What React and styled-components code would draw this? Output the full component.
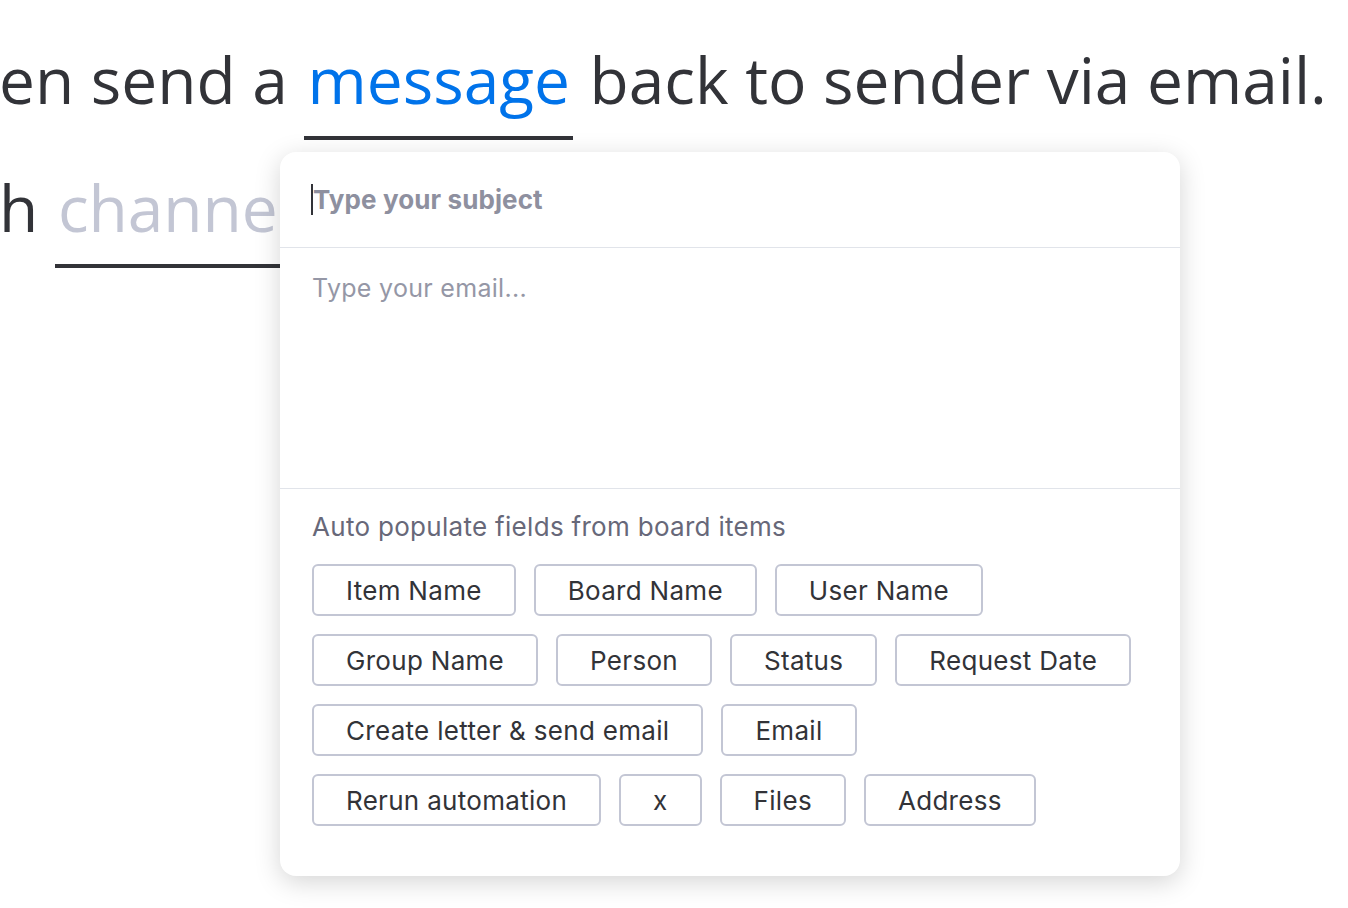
import styled, { createGlobalStyle } from "styled-components";

const GlobalStyle = createGlobalStyle`
  html, body {
    margin: 0;
    padding: 0;
    background: #ffffff;
  }
  body {
    width: 1348px;
    height: 908px;
    overflow: hidden;
  }
`

const chipRows = [
    ["Item Name", "Board Name", "User Name"],
    ["Group Name", "Person", "Status", "Request Date"],
    ["Create letter & send email", "Email"],
    ["Rerun automation", "x", "Files", "Address"],
];

const Page = styled.div`
  position: relative;
  width: 1348px;
  height: 908px;
  overflow: hidden;
  font-family: "Open Sans", "DejaVu Sans", sans-serif;
  color: #323338;
`

const Sentence = styled.div`
  display: flex;
  flex-direction: column;
  padding-top: 16px;
  margin-left: -1px;
`

const Line = styled.div`
  white-space: nowrap;
  font-size: 64px;
  line-height: 128px;
  height: 128px;
`

const Word = styled.span`
  display: inline-block;
  line-height: 112px;
  padding: 0 3px 0;
  border-bottom: 4px solid #323338;
  color: ${props => props.muted ? "#c3c6d4" : "#0073ea"};
`

const Popup = styled.div`
  position: absolute;
  left: 280px;
  top: 152px;
  width: 900px;
  height: 724px;
  background: #ffffff;
  border-radius: 16px;
  box-shadow: 0 6px 26px rgba(0, 0, 0, 0.17);
  display: flex;
  flex-direction: column;
  font-family: "Inter", "Noto Sans", sans-serif;
`

const Subject = styled.div`
  height: 95px;
  display: flex;
  align-items: center;
  padding: 0 32px;
  border-bottom: 1px solid #e1e4ea;
`

const Caret = styled.span`
  width: 2px;
  height: 31px;
  background: #323338;
  margin-left: -1px;
`

const SubjectPlaceholder = styled.span`
  font-size: 26px;
  font-weight: 700;
  color: #8e909f;
  letter-spacing: 0.1px;
`

const Body = styled.div`
  height: 241px;
  padding: 25px 32px 0;
  box-sizing: border-box;
  border-bottom: 1px solid #e1e4ea;
  font-size: 25px;
  letter-spacing: 0.3px;
  color: #9597a6;
`

const Fields = styled.div`
  padding: 21px 32px 0;
  display: flex;
  flex-direction: column;
`

const Label = styled.div`
  font-size: 26px;
  line-height: 34px;
  letter-spacing: 0.3px;
  color: #676879;
  margin-bottom: 20px;
`

const ChipGrid = styled.div`
  display: flex;
  flex-direction: column;
  gap: 18px;
`

const ChipRow = styled.div`
  display: flex;
  gap: 18px;
`

const Chip = styled.div`
  height: 52px;
  box-sizing: border-box;
  padding: 0 32px;
  border: 2px solid #c3c6d4;
  border-radius: 6px;
  display: flex;
  align-items: center;
  justify-content: center;
  font-size: 26px;
  letter-spacing: 0.3px;
  color: #323338;
  white-space: nowrap;
`

const App = () => {
    return (
        <Page>
            <GlobalStyle/>
            <Sentence>
                <Line>en send a <Word>message</Word> back to sender via email.</Line>
                <Line>h <Word muted>channel</Word></Line>
            </Sentence>
            <Popup>
                <Subject>
                    <Caret/>
                    <SubjectPlaceholder>Type your subject</SubjectPlaceholder>
                </Subject>
                <Body>Type your email...</Body>
                <Fields>
                    <Label>Auto populate fields from board items</Label>
                    <ChipGrid>
                        {chipRows.map((row, i) => (
                            <ChipRow key={i}>
                                {row.map((name) => (
                                    <Chip key={name}>{name}</Chip>
                                ))}
                            </ChipRow>
                        ))}
                    </ChipGrid>
                </Fields>
            </Popup>
        </Page>
    )
}

export default App
